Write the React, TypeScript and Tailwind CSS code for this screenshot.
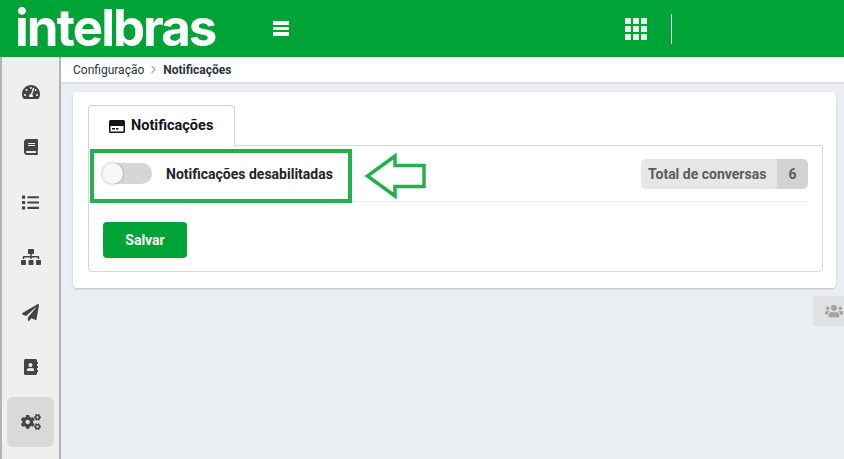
import { ChevronRight } from 'lucide-react'
import { FaAddressBook, FaBook, FaCogs, FaList, FaPaperPlane, FaSitemap, FaTachometerAlt, FaUsers } from 'react-icons/fa'

const navItems = [
  { icon: FaTachometerAlt, size: 18 },
  { icon: FaBook, size: 16 },
  { icon: FaList, size: 17 },
  { icon: FaSitemap, size: 20 },
  { icon: FaPaperPlane, size: 17 },
  { icon: FaAddressBook, size: 16 },
  { icon: FaCogs, size: 20, active: true },
]

export default function App() {
  return (
    <div className="relative flex h-[459px] w-[844px] flex-col overflow-hidden bg-[#ebeef3] font-['Roboto',sans-serif]">
      <header className="flex h-[57px] shrink-0 items-center bg-[#00a335] text-white">
        <span className="mb-[2px] ml-[15px] w-[243px] shrink-0 font-['Inter',sans-serif] text-[51px] leading-[55px] font-bold tracking-[-2px] text-white">intelbras</span>
        <div className="ml-[15px] flex w-[16px] flex-col gap-[2px]">
          <div className="h-[3.5px] bg-white" />
          <div className="h-[3.5px] bg-white" />
          <div className="h-[3.5px] bg-white" />
        </div>
        <div className="ml-[336px] grid grid-cols-3 gap-[2px] opacity-90">
          {Array.from({ length: 9 }).map((_, i) => (
            <div key={i} className="size-[6px] bg-white" />
          ))}
        </div>
        <div className="ml-[24px] h-[30px] w-px bg-white" />
      </header>

      <div className="flex min-h-0 flex-1">
        <aside className="flex w-[61px] shrink-0 flex-col items-center border-r-2 border-l-2 border-[#b5b5b5] bg-[#efefef] pt-[10px] text-[#444]">
          {navItems.map((item, i) => (
            <div
              key={i}
              className={`flex h-[50px] w-[47px] items-center justify-center rounded-md ${item.active ? 'bg-[#d9d9d9]' : ''} ${i > 0 ? 'mt-[5px]' : ''}`}
            >
              <item.icon size={item.size} />
            </div>
          ))}
        </aside>

        <main className="min-w-0 flex-1">
          <div className="flex h-[27px] items-center border-b-2 border-[#dcdfe3] bg-white pl-[12px] text-xs text-[#2b3240]">
            <span>Configuração</span>
            <ChevronRight size={13} strokeWidth={2} className="mx-[3px] text-[#aaa]" />
            <span className="font-bold">Notificações</span>
          </div>

          <section className="mt-[8px] ml-[12px] h-[196px] w-[763px] rounded-[4px] bg-white pt-[13px] pr-[13px] pl-[15px] shadow-[0_1px_2px_rgba(0,0,0,0.2)]">
            <div className="flex">
              <div className="relative z-10 -mb-px flex h-[41px] w-[147px] items-center gap-[6px] rounded-t-[4px] border border-b-0 border-[#cfd2d6] bg-white pl-[20px] text-[14.5px] font-bold text-[#11151c]">
                <svg width="16" height="13" viewBox="0 0 16 13">
                  <path fillRule="evenodd" d="M1.500 0h13A1.500 1.500 0 0 1 16 1.500v10a1.500 1.500 0 0 1-1.500 1.500h-13A1.500 1.500 0 0 1 0 11.500v-10A1.500 1.500 0 0 1 1.500 0ZM1.500 6v5.500h13V6ZM3 8h3v1.500H3Zm4 0h2.500v1.500H7Z" fill="#11151c" />
                </svg>
                Notificações
              </div>
            </div>
            <div className="h-[127px] rounded-b-[4px] border border-[#d5d7da] px-[14px]">
              <div className="flex h-[56px] items-center border-b border-[#ececec]">
                <div className="relative -ml-px h-[21px] w-[50px] rounded-full bg-[#d6d6d6]">
                  <div className="absolute top-0 left-0 size-[21px] rounded-full bg-[#f7f7f7] shadow-[0_0_3px_rgba(0,0,0,0.3)]" />
                </div>
                <span className="ml-[14px] text-sm font-bold text-[#20242b]">Notificações desabilitadas</span>
                <div className="ml-auto flex h-[30px] items-stretch overflow-hidden rounded-[5px] text-sm font-bold text-[#5c5c5c]">
                  <span className="flex w-[136px] items-center bg-[#e6e6e6] pl-[7px]">Total de conversas</span>
                  <span className="flex w-[31px] items-center justify-center bg-[#d2d2d2]">6</span>
                </div>
              </div>
              <button className="mt-[20px] h-[36px] w-[84px] rounded-[4px] bg-[#00a335] text-sm font-bold text-white">Salvar</button>
            </div>
          </section>
        </main>
      </div>

      {/* annotation over the screenshot */}
      <div className="absolute top-[149px] left-[90px] h-[54px] w-[262px] border-4 border-[#22b14c]" />
      <svg className="absolute top-[152px] left-[364px]" width="64" height="48" viewBox="0 0 64 48" fill="none">
        <path d="M3.500 24 L31 4 V13.500 H60 V34.500 H31 V44 Z" stroke="#22b14c" strokeWidth="3.500" />
      </svg>

      <div className="absolute top-[296px] left-[813px] flex h-[30px] w-[31px] items-center justify-end bg-[#e0e1e3] pr-px text-[#a3a3a3]">
        <FaUsers size={18} />
      </div>
    </div>
  )
}
